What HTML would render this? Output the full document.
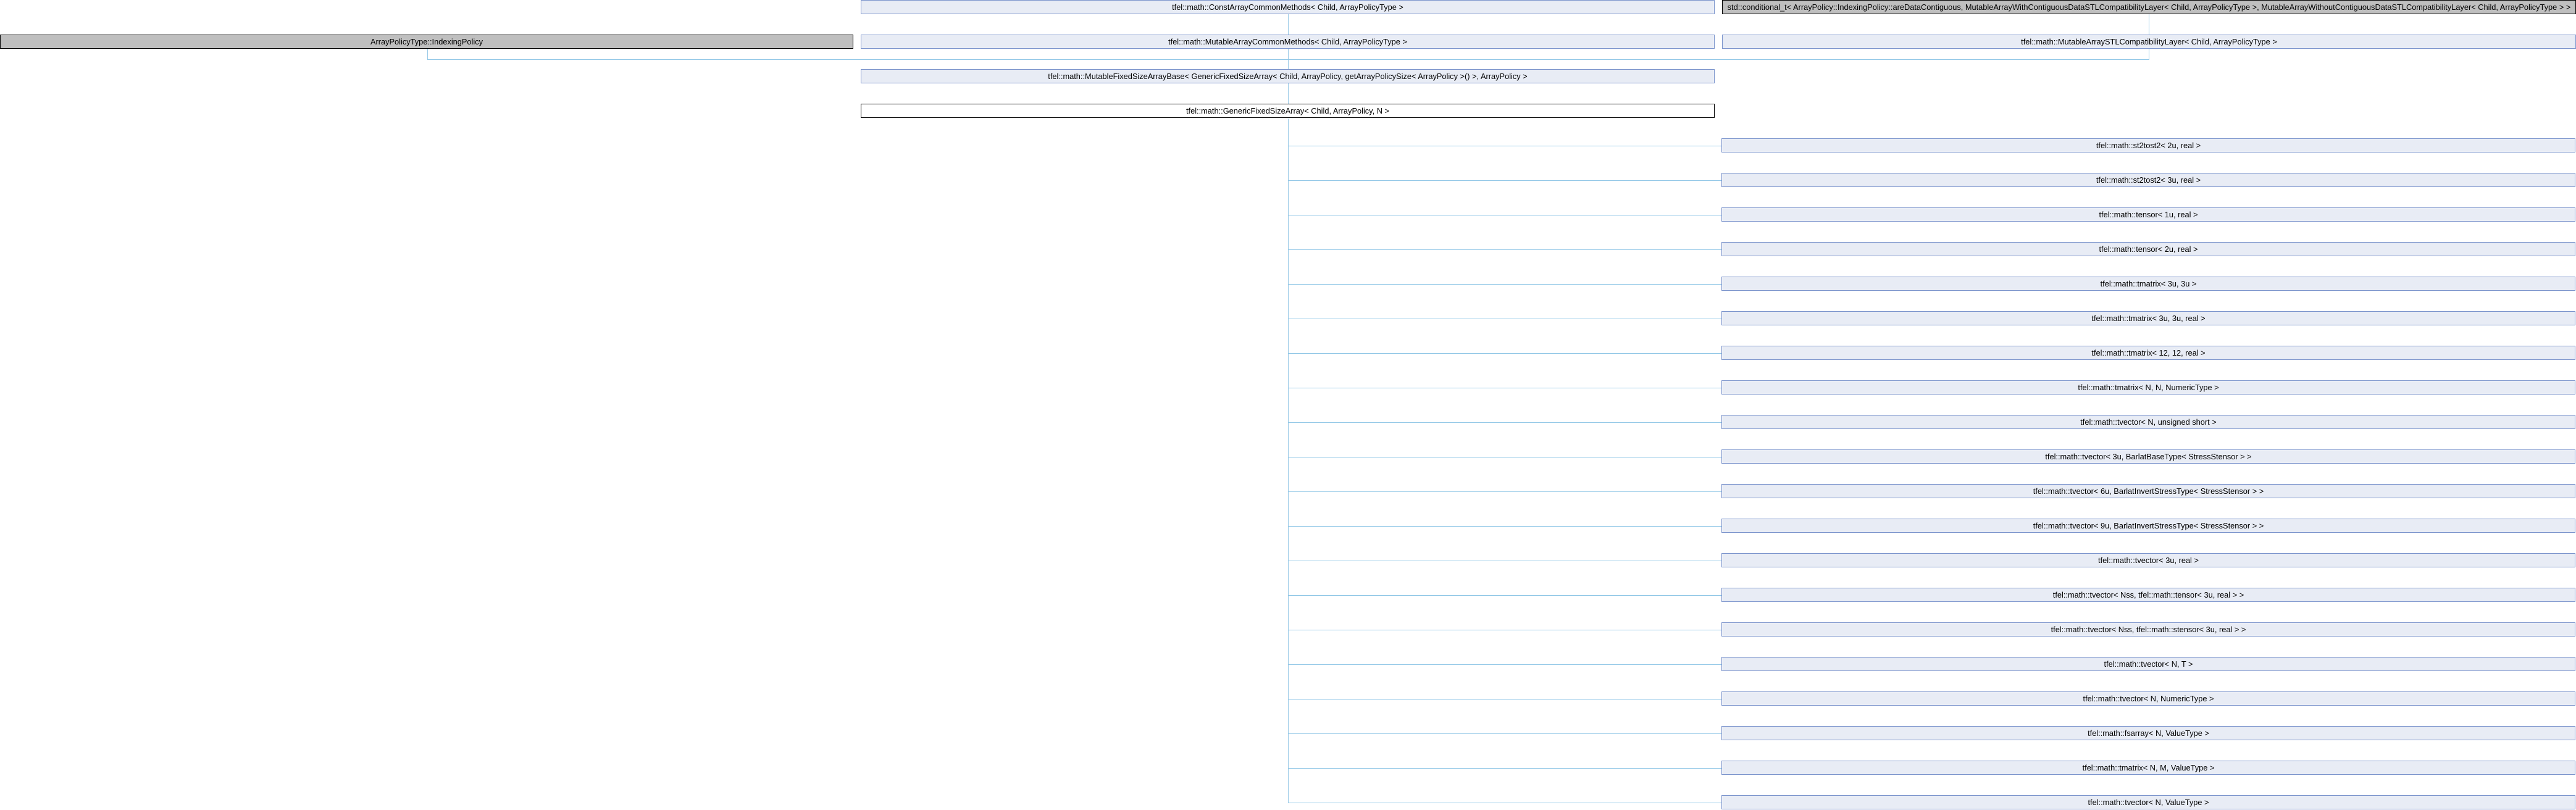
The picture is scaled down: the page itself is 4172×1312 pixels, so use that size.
<!DOCTYPE html>
<html><head><meta charset="utf-8"><style>
html,body{margin:0;padding:0;background:#fff;width:4172px;height:1312px;overflow:hidden;position:relative}
.b{position:absolute;height:21px;border:1px solid #7b94cc;background:#e8ecf5;font:12.8px "Liberation Sans",sans-serif;color:#000;text-align:center;line-height:21px;white-space:nowrap;box-sizing:content-box;overflow:hidden}
.g{background:#bfbfbf;border-color:#000}
.w{background:#fff;border-color:#000}
.h{position:absolute;height:1px;background:#8fc6e6}
.v{position:absolute;width:1px;background:#9ccbe8}
</style></head><body>
<div class="b" style="left:1394px;top:0;width:1381px">tfel::math::ConstArrayCommonMethods&lt; Child, ArrayPolicyType &gt;</div>
<div class="b g" style="left:2789px;top:0;width:1381px">std::conditional_t&lt; ArrayPolicy::IndexingPolicy::areDataContiguous, MutableArrayWithContiguousDataSTLCompatibilityLayer&lt; Child, ArrayPolicyType &gt;, MutableArrayWithoutContiguousDataSTLCompatibilityLayer&lt; Child, ArrayPolicyType &gt; &gt;</div>
<div class="b g" style="left:0;top:56px;width:1380px">ArrayPolicyType::IndexingPolicy</div>
<div class="b" style="left:1394px;top:56px;width:1381px">tfel::math::MutableArrayCommonMethods&lt; Child, ArrayPolicyType &gt;</div>
<div class="b" style="left:2789px;top:56px;width:1381px">tfel::math::MutableArraySTLCompatibilityLayer&lt; Child, ArrayPolicyType &gt;</div>
<div class="b" style="left:1394px;top:112px;width:1381px">tfel::math::MutableFixedSizeArrayBase&lt; GenericFixedSizeArray&lt; Child, ArrayPolicy, getArrayPolicySize&lt; ArrayPolicy &gt;() &gt;, ArrayPolicy &gt;</div>
<div class="b w" style="left:1394px;top:168px;width:1381px">tfel::math::GenericFixedSizeArray&lt; Child, ArrayPolicy, N &gt;</div>

<div class="v" style="left:2086px;top:23px;height:33px"></div>
<div class="v" style="left:2086px;top:79px;height:33px"></div>
<div class="v" style="left:2086px;top:135px;height:33px"></div>
<div class="v" style="left:3480px;top:23px;height:33px"></div>
<div class="v" style="left:3480px;top:79px;height:18px"></div>
<div class="v" style="left:692px;top:79px;height:18px"></div>
<div class="h" style="left:692px;top:96px;width:2789px"></div>
<div class="v" style="left:2086px;top:192px;height:1109px"></div>

<div id="list"></div>
<script>
var n=["tfel::math::st2tost2< 2u, real >","tfel::math::st2tost2< 3u, real >","tfel::math::tensor< 1u, real >","tfel::math::tensor< 2u, real >","tfel::math::tmatrix< 3u, 3u >","tfel::math::tmatrix< 3u, 3u, real >","tfel::math::tmatrix< 12, 12, real >","tfel::math::tmatrix< N, N, NumericType >","tfel::math::tvector< N, unsigned short >","tfel::math::tvector< 3u, BarlatBaseType< StressStensor > >","tfel::math::tvector< 6u, BarlatInvertStressType< StressStensor > >","tfel::math::tvector< 9u, BarlatInvertStressType< StressStensor > >","tfel::math::tvector< 3u, real >","tfel::math::tvector< Nss, tfel::math::tensor< 3u, real > >","tfel::math::tvector< Nss, tfel::math::stensor< 3u, real > >","tfel::math::tvector< N, T >","tfel::math::tvector< N, NumericType >","tfel::math::fsarray< N, ValueType >","tfel::math::tmatrix< N, M, ValueType >","tfel::math::tvector< N, ValueType >"];
var h="";
for(var i=0;i<n.length;i++){var t=224+56*i;
h+='<div class="h" style="left:2086px;top:'+(t+12)+'px;width:702px"></div>';
var d=document.createElement('div');d.textContent=n[i];
h+='<div class="b" style="left:2788px;top:'+t+'px;width:1381px">'+d.innerHTML+'</div>';}
document.getElementById('list').innerHTML=h;
</script>
</body></html>
